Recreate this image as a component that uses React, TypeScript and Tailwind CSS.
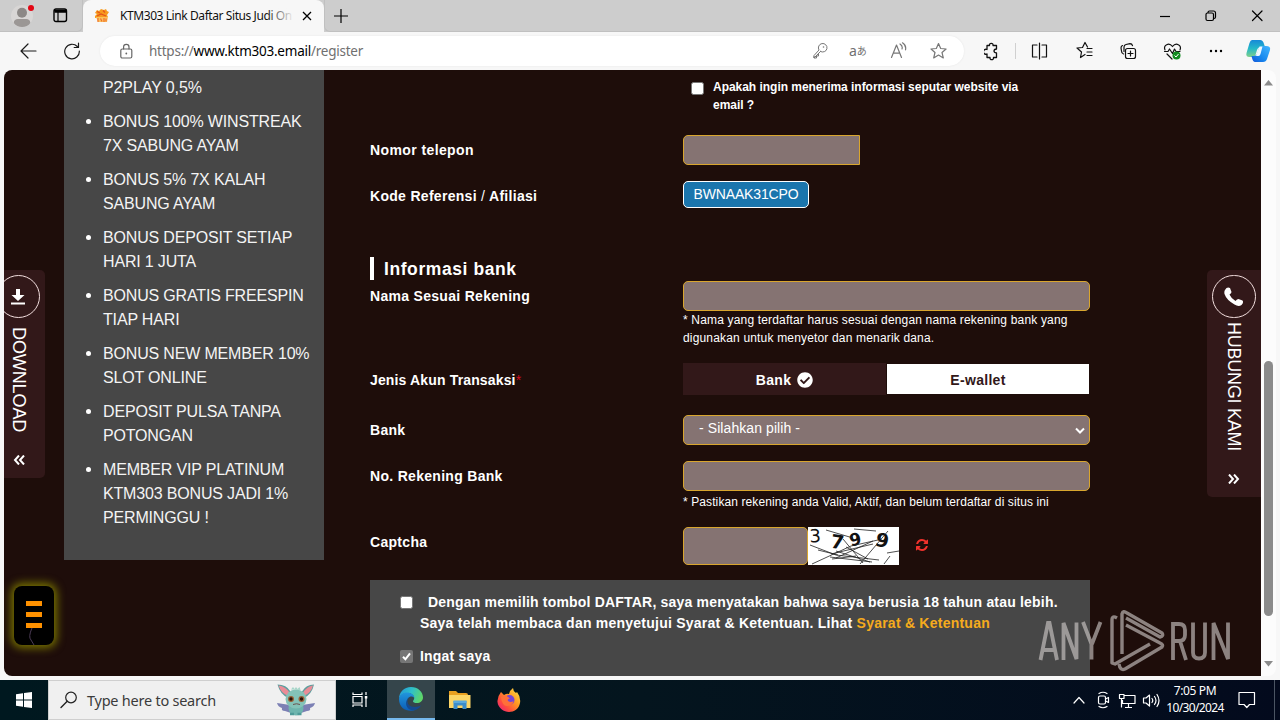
import React from 'react';
import { FaCheckCircle } from 'react-icons/fa';

const promos: string[][] = [
  ['BONUS 100% WINSTREAK', '7X SABUNG AYAM'],
  ['BONUS 5% 7X KALAH', 'SABUNG AYAM'],
  ['BONUS DEPOSIT SETIAP', 'HARI 1 JUTA'],
  ['BONUS GRATIS FREESPIN', 'TIAP HARI'],
  ['BONUS NEW MEMBER 10%', 'SLOT ONLINE'],
  ['DEPOSIT PULSA TANPA', 'POTONGAN'],
  ['MEMBER VIP PLATINUM', 'KTM303 BONUS JADI 1%', 'PERMINGGU !'],
];

const stroke = { fill: 'none', stroke: 'currentColor', strokeWidth: 1.2, strokeLinecap: 'round', strokeLinejoin: 'round' } as const;

function Favicon() {
  return (
    <svg width="16" height="16" viewBox="0 0 16 16">
      <path d="M1 5l2-3 2 1 2-2 3 1 2-1 1 2 2 1-2 3 1 2-13 1V8l2-2z" fill="#f79a1c" />
      <path d="M3 3.500l3 1.500M9 2.500l2 2M3 8l4-2 5 2" stroke="#e4541c" strokeWidth="1.300" fill="none" />
      <path d="M2 9h12l-1 5H4z" fill="#fbc25c" />
      <path d="M4 10v4M6.500 10.500l1.500 3M10 10v4M12 10.500v3" stroke="#ef6a2a" strokeWidth="1.100" />
    </svg>
  );
}

function TabStrip() {
  return (
    <div className="flex h-8 items-start bg-[#cdcdcd]">
      <div className="flex h-8 w-[83px] items-center rounded-br-md border-b border-r border-[#c0c0c0]">
        <svg className="ml-2.5" width="26" height="26" viewBox="0 0 26 26">
          <circle cx="12" cy="13" r="11" fill="#d8d6d5" />
          <circle cx="12" cy="9.700" r="5" fill="#8c8886" />
          <path d="M3.800 20c0-3 2-4 4-4h8.500c2 0 4 1 4 4-1.500 2.500-5 4-8.200 4s-6.500-1.500-8.300-4z" fill="#9b9795" />
          <circle cx="21" cy="5" r="3" fill="#e30613" />
        </svg>
        <svg className="ml-[17px] text-black" width="15" height="15" viewBox="0 0 15 15">
          <rect x="1" y="1" width="12.500" height="12.500" rx="2" fill="none" stroke="currentColor" strokeWidth="1.400" />
          <path d="M1 2.500h12.500M1.500 4h12" stroke="currentColor" strokeWidth="1.500" />
          <path d="M5 4v9" stroke="currentColor" strokeWidth="1.200" />
        </svg>
      </div>
      <div className="flex h-8 w-[241px] items-center rounded-t-lg bg-[#f7f7f7] pl-[11px]">
        <Favicon />
        <div className="relative ml-2.5 w-[174px] whitespace-nowrap text-[12px] leading-4 text-[#111]">
          <span className="tracking-[-0.42px]">KTM303 Link Daftar Situs Judi On</span>
          <div className="absolute right-0 top-0 h-4 w-7 bg-linear-to-r from-transparent to-[#f7f7f7]" />
        </div>
        <svg className="ml-2 text-black" width="10" height="10" viewBox="0 0 10 10">
          <path d="M1 1l8 8M9 1L1 9" stroke="currentColor" strokeWidth="1.300" />
        </svg>
      </div>
      <div className="flex h-8 flex-1 items-center rounded-bl-md border-b border-l border-[#c0c0c0]">
        <svg className="ml-[9px] text-black" width="14" height="14" viewBox="0 0 14 14">
          <path d="M7 0v14M0 7h14" stroke="currentColor" strokeWidth="1.200" />
        </svg>
        <div className="flex-1" />
        <svg className="text-black" width="120" height="14" viewBox="0 0 120 14">
          <path d="M10 7.500h10" {...stroke} strokeLinecap="butt" />
          <rect x="56" y="4" width="7.500" height="7.500" rx="1.500" {...stroke} />
          <path d="M58 3.500q0-1.500 1.500-1.500h4q2 0 2 2v4q0 1.500-1.500 1.500" {...stroke} />
          <path d="M102.500 2l9.500 9.500M112 2l-9.500 9.500" {...stroke} />
        </svg>
        <div className="w-2.5" />
      </div>
    </div>
  );
}

function Toolbar() {
  return (
    <div className="flex h-[38px] items-center bg-[#f7f7f7] text-[#1b1b1b]">
      <svg className="ml-5" width="62" height="18" viewBox="0 0 62 18">
        <path d="M16 9H1M8 2L1 9l7 7" {...stroke} />
        <path d="M57.300 4.500A7.300 7.300 0 1 0 59.300 9M58.500 1.200v4.300h-4.300" {...stroke} />
      </svg>
      <div className="ml-[18px] flex h-[30px] w-[864px] items-center rounded-full bg-white pr-2 shadow-[0_0_2px_#e4e4e4]">
        <svg className="ml-5 text-[#666]" width="13" height="17" viewBox="0 0 13 17">
          <rect x=".8" y="6" width="11" height="9" rx="1.500" {...stroke} />
          <path d="M3.600 6V4a2.700 2.700 0 0 1 5.400 0v2" {...stroke} />
          <circle cx="6.300" cy="10.500" r=".9" fill="currentColor" />
        </svg>
        <div className="ml-4 whitespace-nowrap text-[13.500px] leading-5 tracking-[-0.24px] text-[#707070]">
          https://<span className="text-black">www.ktm303.email</span>/register
        </div>
        <div className="flex-1" />
        <svg className="text-[#777]" width="17" height="18" viewBox="0 0 17 18">
          <path d="M8.500 9.500L2 16v-2.500l5-5.500a4.300 4.300 0 1 1 1.500 1.500zM2 14.500v1.500h2.500v-2h2v-2" {...stroke} strokeWidth="1" />
          <circle cx="11.500" cy="5" r=".8" fill="currentColor" />
        </svg>
        <div className="ml-5 flex w-[19px] items-center whitespace-nowrap text-[14px] leading-5 text-[#707070]">
          <span>a</span>
          <span className="font-['Noto_Sans_CJK_JP',sans-serif] text-[10px]">あ</span>
        </div>
        <svg className="ml-[22px] text-[#777]" width="66" height="18" viewBox="78 0 66 18">
          <path d="M79.500 15.500L84.500 3l5 12.500M81.200 11.200h6.600M88 2q3 2 2 5M90.500 .8q4 2.500 3 7" {...stroke} />
          <path d="M126.500 1.500l2.200 5 5.400.5-4.100 3.500 1.300 5.400-4.800-2.900-4.800 2.900 1.300-5.400L119 7l5.300-.5z" {...stroke} />
        </svg>
      </div>
      <svg className="ml-5 text-[#111]" width="296" height="26" viewBox="984 38 296 26">
        <path d="M987 45.500h2.500a1.800 1.800 0 1 1 3.500 0h3.500v3.500q-2.500.3-2.500 2t2.500 2v4.500h-3a1.800 1.800 0 1 1-3.500 0h-3v-3.500a2.500 2.500 0 1 1 0-4.500z" {...stroke} strokeWidth="1.300" />
        <path d="M1015.500 43v16" stroke="#d0d0d0" />
        <path d="M1037 45h-4.500v12h4.500M1039.500 43v16M1042 45h4.500v12h-4.500" {...stroke} />
        <path d="M1085 54.500l-4.500 3 1-5.500-4.500-4 5.500-.5 2.500-5 2.500 4.500M1087 48.500h5M1087 52h5M1087 55.500h5" {...stroke} />
        <rect x="1125.500" y="48.500" width="10" height="10" rx="2" {...stroke} />
        <path d="M1130.500 51v5M1128 53.500h5M1123.500 54q-2-.5-2-3l-.5-3q0-2 1.500-2.500M1124 51.500v-4.500q0-2 2-2.500l4-.8q2 0 2.500 2" {...stroke} />
        <path d="M1165 50c-2-5 4-8 7.500-3.500 3.500-4.500 9.500-1.500 7.500 3.500M1164.500 51.500h3.500l1.500-2.500 3 4.500 2-4.500 1.500 2.500h4M1167 54l5 5" {...stroke} />
        <circle cx="1176.500" cy="55.500" r="4" fill="#128c20" />
        <path d="M1174.500 55.500l1.500 1.500 2.500-3" stroke="#fff" fill="none" />
        <circle cx="1211" cy="51" r="1.200" /><circle cx="1216" cy="51" r="1.200" /><circle cx="1221" cy="51" r="1.200" />
        <defs>
          <linearGradient id="cpa" x1="0" y1="0" x2="0" y2="1"><stop stopColor="#1689d8" /><stop offset=".5" stopColor="#24b8c8" /><stop offset="1" stopColor="#7fd08a" /></linearGradient>
          <linearGradient id="cpb" x1="1" y1="0" x2="0" y2="1"><stop stopColor="#43b6ff" /><stop offset=".6" stopColor="#1687ee" /><stop offset="1" stopColor="#1557d8" /></linearGradient>
        </defs>
        <path d="M1252 40h8q3 0 4 4l1 3h-4q-3 0-4 3l-1.500 5q-.5 2-3 2h-3q-4 0-3-4l3-10q1-3 2.500-3z" fill="url(#cpa)" />
        <path d="M1263 46h3q5 0 4 4l-3 9q-1 3-4 3h-8q-2 0-3-4l-.5-2h3q2 0 3-3l1.500-5q.8-2 4-2z" fill="url(#cpb)" />
        <path d="M1259.500 46.500l-3.500 9.500h2.500q1.500 0 2-2l2-7.500z" fill="#eef8ff" />
      </svg>
    </div>
  );
}

function Sidebar() {
  return (
    <aside className="h-[490px] w-[260px] shrink-0 bg-[#474747] pl-[39px] pt-1.5 text-[16px] leading-6 text-[#f4f4f4]">
      <div className="whitespace-nowrap tracking-[-0.1px]">P2PLAY 0,5%</div>
      <ul className="mt-2.5 flex flex-col gap-2.5">
        {promos.map((lines) => (
          <li key={lines[0]} className="relative whitespace-nowrap tracking-[-0.17px]">
            <span className="absolute left-[-17px] top-[9px] size-[5px] rounded-full bg-white" />
            {lines.map((l) => <div key={l}>{l}</div>)}
          </li>
        ))}
      </ul>
    </aside>
  );
}

const inputBase = 'border border-[#d9a62e] bg-[#857372]';

function Row({ label, mt, h, children, labelPad = 'pt-[5px]' }: { label: React.ReactNode; mt: string; h: string; children: React.ReactNode; labelPad?: string }) {
  return (
    <div className={`flex ${mt} ${h}`}>
      <div className={`w-[313px] shrink-0 whitespace-nowrap ${labelPad} text-[14px] font-bold leading-5 tracking-[0.3px]`}>{label}</div>
      <div className="w-[407px]">{children}</div>
    </div>
  );
}

function CaptchaImage() {
  return (
    <div className="relative flex h-[38px] w-[91px] bg-white font-['DejaVu_Sans',sans-serif] leading-5 text-[#111]">
      <span className="ml-[2px] -mt-px w-[20px] -rotate-3 text-[18px]">3</span>
      <span className="mt-[5px] w-[21px] rotate-[8deg] text-[19px] font-bold">7</span>
      <span className="mt-px w-[23px] rotate-[-12deg] text-[17px] font-bold">9</span>
      <span className="mt-[3px] w-[15px] rotate-[14deg] text-[19px] font-bold">9</span>
      <svg className="absolute inset-0" width="91" height="38" viewBox="0 0 91 38">
        <path d="M18 3l27 8M2 18l26 10 43 5M4 37l39-18 27-6M23 27l42-10M28 24l34 11M35 12l20 24M46 2l22 2M80 4L52 37M65 14L28 31M22 30l42 5M38 20l22 12M10 23l20 5M79 26l12-2M76 37l6-8M24 32l24-3" fill="none" stroke="#222" strokeWidth=".8" />
      </svg>
    </div>
  );
}

function Form() {
  return (
    <main className="ml-[46px] w-[720px] text-white">
      <div className="flex h-[65px] pl-[321px] pt-2">
        <span className="mt-1 size-[13px] shrink-0 rounded-[2.500px] border border-[#767676] bg-white" />
        <div className="ml-[9px] whitespace-nowrap text-[12px] font-bold leading-[18px] tracking-[-0.03px]">
          <div>Apakah ingin menerima informasi seputar website via</div>
          <div>email ?</div>
        </div>
      </div>
      <Row label={<span className="tracking-[0.4px]">Nomor telepon</span>} mt="mt-0" h="h-[30px]">
        <div className={`${inputBase} h-[30px] w-[177px] rounded-l-[5px]`} />
      </Row>
      <Row label={<>Kode Referensi <span className="font-normal">/</span> Afiliasi</>} mt="mt-4" h="h-[76px]">
        <div className="flex h-[27px] w-[126px] items-center justify-center rounded-[5px] border border-white bg-[#1a75ad] text-[14px] tracking-[-0.15px]">BWNAAK31CPO</div>
      </Row>
      <h2 className="flex h-[23px] items-center border-l-4 border-white pl-2.5 pt-px text-[17.500px] font-bold leading-[22px] tracking-[0.58px]">Informasi bank</h2>
      <Row label="Nama Sesuai Rekening" mt="mt-px" h="h-[67px]">
        <div className={`${inputBase} h-[30px] rounded-[5px]`} />
        <div className="whitespace-nowrap text-[12px] leading-[18px] tracking-[0.17px]">
          <div>* Nama yang terdaftar harus sesuai dengan nama rekening bank yang</div>
          <div>digunakan untuk menyetor dan menarik dana.</div>
        </div>
      </Row>
      <Row label={<span className="tracking-[0.15px]">Jenis Akun Transaksi<span className="font-normal text-[#d10f20]">*</span></span>} mt="mt-[15px]" h="h-8" labelPad="pt-[7px]">
        <div className="flex h-8 text-[14px] font-bold tracking-[0.3px]">
          <div className="flex w-[203px] items-center justify-center gap-1.5 bg-[#321819] pt-0.5">Bank <FaCheckCircle size={16} /></div>
          <div className="my-px ml-px flex w-[202px] items-center justify-center bg-white pr-5 pt-0.5 text-[#321819]">E-wallet</div>
        </div>
      </Row>
      <Row label="Bank" mt="mt-5" h="h-[30px]">
        <div className={`${inputBase} flex h-[30px] items-center rounded-[5px] pl-[15px] pr-1`}>
          <span className="mb-1 flex-1 text-[14px] leading-5 tracking-[0.08px]">- Silahkan pilih -</span>
          <svg className="mt-0.5" width="10" height="8" viewBox="0 0 10 8"><path d="M1 1.500l4 4 4-4" fill="none" stroke="#fff" strokeWidth="2" /></svg>
        </div>
      </Row>
      <Row label="No. Rekening Bank" mt="mt-4" h="h-[50px]">
        <div className={`${inputBase} h-[30px] rounded-[5px]`} />
        <div className="mt-0.5 whitespace-nowrap text-[12px] leading-[18px] tracking-[0.1px]">* Pastikan rekening anda Valid, Aktif, dan belum terdaftar di situs ini</div>
      </Row>
      <Row label="Captcha" mt="mt-4" h="h-[38px]">
        <div className="flex h-[38px] items-center">
          <div className={`${inputBase} h-[38px] w-[125px] rounded-[5px]`} />
          <CaptchaImage />
          <svg className="-mt-[3px] ml-[17px]" width="12" height="12" viewBox="0 0 1536 1536">
            <path fill="#f0322c" d="M1511 928q0 5-1 7-64 268-268 434.500T764 1536q-146 0-282.500-55T238 1324l-129 129q-19 19-45 19t-45-19-19-45V960q0-26 19-45t45-19h448q26 0 45 19t19 45-19 45l-137 137q71 66 161 102t187 36q134 0 250-65t186-179q11-17 53-117 8-23 30-23h192q13 0 22.500 9.500t9.500 22.500zM1536 128v448q0 26-19 45t-45 19h-448q-26 0-45-19t-19-45 19-45l138-138Q969 256 768 256q-134 0-250 65T332 500q-11 17-53 117-8 23-30 23H50q-13 0-22.500-9.500T18 608v-7q65-268 270-434.500T768 0q146 0 284 55.500T1297 212l130-129q19-19 45-19t45 19 19 45z" />
          </svg>
        </div>
      </Row>
      <div className="mt-[15px] h-24 bg-[#474747] pl-[30px] pt-3 text-[14px] font-bold">
        <div className="flex">
          <span className="mt-1 size-[13px] shrink-0 rounded-[2.500px] border border-[#767676] bg-white" />
          <div className="ml-[7px] whitespace-nowrap leading-[21px]">
            <div className="pl-2 tracking-[0.19px]">Dengan memilih tombol DAFTAR, saya menyatakan bahwa saya berusia 18 tahun atau lebih.</div>
            <div className="tracking-[0.235px]">Saya telah membaca dan menyetujui Syarat &amp; Ketentuan. Lihat <span className="text-[#f5ab1d]">Syarat &amp; Ketentuan</span></div>
          </div>
        </div>
        <div className="mt-3 flex items-center">
          <svg width="13" height="13" viewBox="0 0 13 13"><rect width="13" height="13" rx="2" fill="#767676" /><path d="M3 6.800l2.400 2.500L10 3.300" fill="none" stroke="#fff" strokeWidth="2" /></svg>
          <span className="ml-[7px] leading-5 tracking-[0.2px]">Ingat saya</span>
        </div>
      </div>
    </main>
  );
}

function Watermark() {
  return (
    <svg className="absolute bottom-1 right-0 opacity-60" width="246" height="72" viewBox="1034 604 246 72">
      <g fill="none" stroke="#d5d0cf" strokeWidth="3.800">
        <path d="M1040.500 660l7.500-37h1.500l7.500 37M1043 650h12" />
        <path d="M1063.500 660v-37l13 36v-36.500" />
        <path d="M1083 622l8.500 22v15.500M1100.500 622l-8.500 22" />
        <path d="M1173 660v-36h6q6 0 6 6v5q0 6-6 6h-6M1180 641l6 19" />
        <path d="M1193 622.500v30q0 6 6 6t6-6v-30" />
        <path d="M1213.500 660v-37l14.500 36v-36.500" />
      </g>
      <g fill="none" stroke="#d5d0cf" strokeWidth="3.400" strokeLinejoin="round">
        <path d="M1117 618q-5-3-5 2v43l3 1 35-20" />
        <path d="M1122 654v-40q1-4 5-1l35 20q2 3-2 4l-34-19" />
        <path d="M1119 664q1 7 6 5l37-22q2-2-2-4l-34-18" />
      </g>
    </svg>
  );
}

function SideTabs() {
  return (
    <>
      <div className="absolute left-0 top-[200px] flex h-[208px] w-[41px] flex-col items-center overflow-hidden rounded-r-[5px] bg-[#321819] pt-[5px] text-white">
        <div className="-ml-[13px] flex size-[43px] shrink-0 items-center justify-center rounded-full border border-[#f2dede]">
          <svg width="14" height="16" viewBox="0 0 14 16"><path d="M5 0h4v6h4.500L7 12 .5 6H5zM0 13.500h14v2H0z" fill="#fff" /></svg>
        </div>
        <div className="-ml-[11px] mt-[9px] h-[106px] text-[18px] leading-5 tracking-[-0.1px] [writing-mode:vertical-rl]">DOWNLOAD</div>
        <svg className="-ml-[11px] mt-[22px]" width="12" height="10" viewBox="0 0 12 10"><path d="M6 .5L2 5l4 4.500M11 .5L7 5l4 4.500" fill="none" stroke="#fff" strokeWidth="2" /></svg>
      </div>
      <div className="absolute right-0 top-[200px] flex h-[227px] w-[54px] flex-col items-center rounded-l-[5px] bg-[#321819] pt-[5px] text-white">
        <div className="flex h-[43px] w-11 shrink-0 items-center justify-center rounded-full border border-[#f2dede]">
          <svg width="20" height="20" viewBox="0 0 20 20"><path d="M1 3Q3-.5 6 1l1.500 4q0 1-2 2.500 2 4.500 6 6.500 1.500-2 3-2l4 1.500q1.500 2-1 4.500-3 2-7-.5Q2.500 13 .5 7q-.5-2.500.5-4z" fill="#fff" /></svg>
        </div>
        <div className="mt-1 h-[131px] whitespace-nowrap text-[18px] leading-5 tracking-[-0.25px] [writing-mode:vertical-rl]">HUBUNGI KAMI</div>
        <svg className="mt-[21px]" width="12" height="10" viewBox="0 0 12 10"><path d="M1 .5L5 5 1 9.500M6 .5L10 5 6 9.500" fill="none" stroke="#fff" strokeWidth="2" /></svg>
      </div>
      <div className="absolute left-2.5 top-[516px] flex h-[59px] w-10 flex-col items-center gap-1.5 rounded-lg bg-black pt-[15px] shadow-[0_0_8px_3px_#777300]">
        <div className="h-[5px] w-4 bg-[#ff9100]" />
        <div className="h-[5px] w-4 bg-[#ff9100]" />
        <div className="h-[5px] w-4 bg-[#ff9100]" />
        <svg className="-ml-1.5 -mt-1.5" width="8" height="17" viewBox="0 0 8 17"><path d="M5 0Q1 9 4 12l3 5" fill="none" stroke="#4b3b55" /></svg>
      </div>
    </>
  );
}

function Scrollbar() {
  return (
    <div className="flex w-[15px] flex-col items-center rounded-r-lg bg-[#fcfcfc]">
      <svg className="mt-2.5" width="9" height="6" viewBox="0 0 9 6"><path d="M4.500 0L9 5.500H0z" fill="#8b8b8b" /></svg>
      <div className="mt-[275px] h-[255px] w-[9px] rounded-full bg-[#8b8b8b]" />
      <svg className="mt-[45px]" width="9" height="6" viewBox="0 0 9 6"><path d="M4.500 5.500L9 0H0z" fill="#8b8b8b" /></svg>
    </div>
  );
}

function Creature() {
  return (
    <svg width="40" height="34" viewBox="0 0 40 34">
      <path d="M14 22L1 20q1 4 5 5-1 3 3 3l6 2zM26 22l13-2q-1 4-5 5 1 3-3 3l-6 2z" fill="#7c80b4" />
      <path d="M12 15Q4 11 1.500 1.500q9 0 13 7zM28 15q8-4 10-13.500-8 0-12 7z" fill="#5f9f9f" />
      <path d="M12 13Q5 10 2.500 2.500q7 1 11 7zM28 13q7-3 9-10.500-6 1-10 7z" fill="#e98c97" />
      <ellipse cx="20" cy="25" rx="7.500" ry="7.500" fill="#6eb5ae" />
      <ellipse cx="20" cy="16" rx="10.500" ry="9.500" fill="#84c3b8" />
      <path d="M15 6.500L17 4l1.500 2L20 4l1.500 2 2-2 1 3z" fill="#a5d5c8" />
      <circle cx="15" cy="16" r="3" fill="#9a6238" /><circle cx="25.500" cy="16" r="3" fill="#9a6238" />
      <circle cx="15" cy="16" r="1.700" fill="#2a130a" /><circle cx="25.500" cy="16" r="1.700" fill="#2a130a" />
      <path d="M17 21.500q3.500-1.500 7 0" stroke="#6b5450" fill="none" />
      <path d="M14 31h4M21.500 31h4" stroke="#4f9b99" strokeWidth="2.500" />
    </svg>
  );
}

function Taskbar() {
  return (
    <footer className="flex h-10 items-center bg-linear-to-r from-[#00181f] via-[#04151e] to-[#030a1d] text-white">
      <div className="flex w-12 justify-center">
        <svg width="16" height="16" viewBox="0 0 16 16"><path d="M0 2.300l7-1v6.300H0zM8 1.100L16 0v7.600H8zM0 8.500h7v6.300l-7-1zM8 8.500h8V16l-8-1.100z" fill="#fff" /></svg>
      </div>
      <div className="flex h-10 w-[288px] items-center border border-[#cfcfcf] bg-[#f0f0f0]">
        <svg className="ml-[11px] text-[#222]" width="18" height="18" viewBox="0 0 18 18"><circle cx="11" cy="6.500" r="5.300" {...stroke} /><path d="M7.200 10.300L1 16.500" {...stroke} strokeWidth="1.400" /></svg>
        <span className="ml-[9px] whitespace-nowrap text-[14.500px] leading-5 tracking-[-0.24px] text-[#3b3b3b]">Type here to search</span>
        <div className="flex-1" />
        <Creature />
        <div className="w-[19px]" />
      </div>
      <div className="flex w-[51px] justify-center pr-1">
        <svg width="18" height="18" viewBox="0 0 18 18"><path d="M2 1.500v2h9v-2M2 16v-2h9v2M2 5.500h9v6.500H2zM15 1v3M15 8v8M15 5v3" fill="none" stroke="#fff" strokeWidth="1.200" /><rect x="13.800" y="5" width="2.500" height="2.500" fill="#fff" /></svg>
      </div>
      <div className="flex h-10 w-12 items-center justify-center border-b-2 border-[#76b9ed] bg-[#35454b]">
        <svg width="24" height="24" viewBox="0 0 24 24">
          <defs>
            <linearGradient id="ea" x1="0" y1=".2" x2="1" y2=".5"><stop stopColor="#2399d8" /><stop offset=".5" stopColor="#2fc0c8" /><stop offset="1" stopColor="#5fd667" /></linearGradient>
            <linearGradient id="eb" x1="0" y1="0" x2="0" y2="1"><stop stopColor="#2196dd" /><stop offset="1" stopColor="#0c5cb4" /></linearGradient>
          </defs>
          <path d="M0 12C0 5 5 0 12 0s12 5 12 10.500c0 3.500-3 5.500-6 5.500-2.500 0-4-.8-4-1.800 0-.8 1.200-1.200 1.200-3.200C15 8 12 6 8.500 6 4 6 1 8.500 0 12z" fill="url(#ea)" />
          <path d="M0 12c.5-4 4-6.500 8-6.500s7.500 2.500 7.300 5.500c-1-1.300-2.800-1.800-4.300-1.200C8.500 11 7.500 13.500 8.300 16c1 4 5 6.500 9.200 6.200C11 26 0 23 0 12z" fill="url(#eb)" />
          <path d="M10.500 10C7 13 8 18 12.500 19.500c3.500 1 7 .3 9.700-1.200-2 3.500-5.500 5.200-9.200 5-6-1-8.500-9-2.500-13.300z" fill="#15498f" />
        </svg>
      </div>
      <div className="flex w-[49px] justify-center">
        <svg width="22" height="20" viewBox="0 0 22 20"><path d="M0 1h7l2 2h8q2 0 2 2h2v5H0z" fill="#e9a020" /><path d="M0 5h21.500v13H0z" fill="#fcd566" /><path d="M4.500 19v-8h13v8h-4v-3.500h-5V19z" fill="#3b8ccb" /><path d="M4.500 10.500h13v2.500h-13z" fill="#5ba9dc" /></svg>
      </div>
      <div className="flex w-[49px] justify-center">
        <svg width="24" height="25" viewBox="0 0 24 25">
          <defs><linearGradient id="ff" x1="1" y1="0" x2="0" y2="1"><stop stopColor="#ffe84a" /><stop offset=".4" stopColor="#ff9a22" /><stop offset=".7" stopColor="#ff4b3e" /><stop offset="1" stopColor="#e3188c" /></linearGradient></defs>
          <path d="M4 4l3 3q3-2 5-1 1-4 4-6 0 3 3 5l1-1q4 5 3 11c-1 6-6 9-11 9S1 20 .5 14Q0 9 4 4z" fill="url(#ff)" />
          <circle cx="12.500" cy="12" r="5" fill="#7545d7" />
          <path d="M4 9q5-3 7 0l2 1.500q-3 .5-2 2.500 3 2 5.500 0-.5 5-6.500 5Q5 18 4 9z" fill="#ff7038" />
        </svg>
      </div>
      <div className="flex-1" />
      <svg className="text-white" width="90" height="20" viewBox="1072 690 90 20">
        <path d="M1075 703l5-5.500 5 5.500" {...stroke} />
        <rect x="1099.500" y="696" width="7" height="8" rx="1.500" {...stroke} /><path d="M1106.500 699l3-1.500v5l-3-1.500M1100 693.500q4-2.500 8 0M1100 706.500q4 2.500 8 0" {...stroke} />
        <path d="M1125 695.500h11v8h-12.500v-3.500M1129.500 704v3M1126 707.500h7" {...stroke} strokeLinecap="butt" /><rect x="1120.500" y="694.500" width="4.500" height="4" {...stroke} /><path d="M1122.500 699v8" {...stroke} />
        <path d="M1144.500 698v5h2.500l3.500 3v-11l-3.500 3zM1153 698.500q1.500 2 0 4M1155.500 696.500q3 4 0 8M1158 694.500q4 6 0 12" {...stroke} />
      </svg>
      <div className="w-[66px] pb-0.5 pl-0.5 text-center text-[12px] leading-[17px]">
        <div className="whitespace-nowrap tracking-[-0.35px]">7:05 PM</div>
        <div className="whitespace-nowrap tracking-[-0.62px]">10/30/2024</div>
      </div>
      <svg className="ml-[11px]" width="18" height="18" viewBox="0 0 18 18"><path d="M1 1.500h15.500v12h-5L8.800 16.500 6 13.500H1z" {...stroke} stroke="#fff" /></svg>
      <div className="ml-[18px] h-10 w-[6px] border-l border-[#4b5563]" />
    </footer>
  );
}

export default function App() {
  return (
    <div className="flex h-[720px] w-[1280px] flex-col overflow-hidden bg-[#f7f7f7] font-['Noto_Sans',sans-serif]">
      <TabStrip />
      <Toolbar />
      <div className="flex h-[606px] pl-1 font-['Liberation_Sans',Arial,sans-serif]">
        <div className="relative flex w-[1257px] items-start overflow-hidden rounded-bl-lg rounded-tl-lg bg-[#1e0d0a] pl-[60px]">
          <Sidebar />
          <Form />
          <SideTabs />
        </div>
        <Scrollbar />
      </div>
      <div className="relative h-1 shrink-0">
        <Watermark />
      </div>
      <Taskbar />
    </div>
  );
}
